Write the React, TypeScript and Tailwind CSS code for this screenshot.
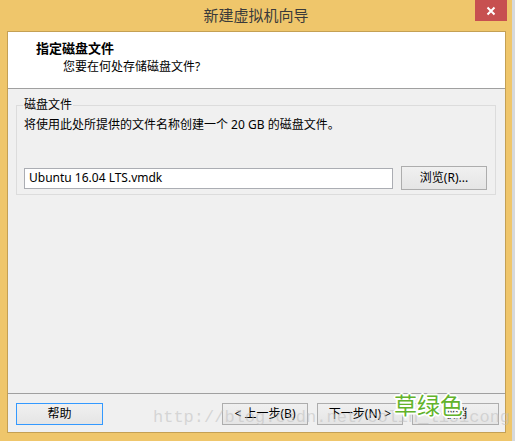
import React from "react";

const FONT = { fontFamily: '"Noto Sans", "Noto Sans CJK SC", sans-serif' };

function Btn({ children, className = "" }: { children: React.ReactNode; className?: string }) {
  return (
    <div
      className={
        "flex h-[22px] w-[86px] items-center justify-center border bg-gradient-to-b from-[#f0f0f0] to-[#e5e5e5] text-[12px] leading-none text-black " +
        className
      }
    >
      {children}
    </div>
  );
}

export default function App() {
  return (
    <div className="flex h-[441px] w-[515px] bg-[#d6d9dc]" style={FONT}>
      <div className="relative flex h-[441px] w-[512px] flex-col bg-[#efc66b]">
        {/* title bar */}
        <div className="relative flex h-[31px] items-center justify-center">
          <span className="text-[15px] leading-none text-[#3a3a3a]">新建虚拟机向导</span>
          <div className="absolute right-[5px] top-0 flex h-[21px] w-[32px] items-center justify-center bg-[#c75050]">
            <svg width="10" height="10" viewBox="0 0 10 10">
              <path d="M1.5 1.5 L8.5 8.5 M8.5 1.5 L1.5 8.5" stroke="white" strokeWidth="2" />
            </svg>
          </div>
        </div>

        {/* content frame */}
        <div className="ml-[7px] flex h-[402px] w-[499px] flex-col border border-[#c4a054] bg-[#f0f0f0]">
          {/* header */}
          <div className="flex h-[57px] flex-col border-b border-[#a0a0a0] bg-white pt-[8px]">
            <div className="pl-[28px] text-[13px] font-bold leading-[17px] text-black">指定磁盘文件</div>
            <div className="mt-[2px] pl-[55px] text-[12px] leading-[16px] text-black">您要在何处存储磁盘文件?</div>
          </div>

          {/* body */}
          <div className="flex flex-1 flex-col">
            <div className="ml-[8px] mt-[16px] flex w-[480px] flex-col border border-[#dcdcdc] pb-[4px]">
              <div className="-mt-[9px] ml-[6px] self-start bg-[#f0f0f0] px-[1px] text-[12px] leading-[16px] text-black">
                磁盘文件
              </div>
              <div className="ml-[7px] mt-[4px] text-[12px] leading-[16px] text-black">
                将使用此处所提供的文件名称创建一个 20 GB 的磁盘文件。
              </div>
              <div className="mt-[33px] flex items-center pl-[7px]">
                <div className="flex h-[21px] w-[369px] items-center border border-[#abadb3] bg-white pl-[4px] text-[12px] text-black">
                  Ubuntu 16.04 LTS.vmdk
                </div>
                <Btn className="ml-[8px] h-[24px] border-[#adadad]">浏览(R)...</Btn>
              </div>
            </div>

            <div className="flex-1" />

            {/* footer */}
            <div className="flex h-[39px] items-start border-t border-[#a0a0a0] pl-[8px] pr-[6px] pt-[9px]">
              <Btn className="w-[87px] border-[#3399ff]">帮助</Btn>
              <div className="flex-1" />
              <Btn className="border-[#adadad]">&lt; 上一步(B)</Btn>
              <Btn className="ml-[9px] border-[#adadad]">下一步(N) &gt;</Btn>
              <Btn className="ml-[9px] w-[87px] border-[#adadad]">取消</Btn>
            </div>
          </div>
        </div>

        {/* watermarks */}
        <div
          className="pointer-events-none absolute left-[153px] top-[408px] whitespace-nowrap text-[17px] leading-[20px] text-[rgba(190,190,190,0.55)]"
          style={{ fontFamily: '"Liberation Mono", monospace' }}
        >
          http://blog.csdn.net/colin_lisicong
        </div>
        <div
          className="pointer-events-none absolute left-[394px] top-[392px] text-[23px] leading-[26px] text-[#62b32b] [text-shadow:2px_0_0_#fff,-2px_0_0_#fff,0_2px_0_#fff,0_-2px_0_#fff,1px_1px_0_#fff,-1px_-1px_0_#fff,1px_-1px_0_#fff,-1px_1px_0_#fff]"
        >
          草绿色
        </div>
      </div>
    </div>
  );
}
